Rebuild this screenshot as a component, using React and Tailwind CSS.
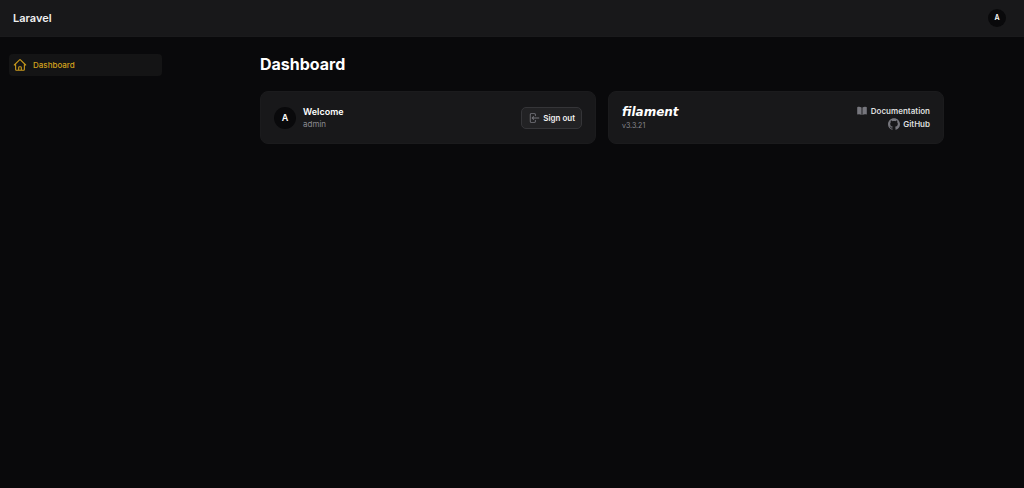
import React from 'react';
import { SiGithub } from 'react-icons/si';

const HomeIcon = () => (
    <svg className="size-[14px] shrink-0 text-[#c9991c]" viewBox="0 0 24 24" fill="none" stroke="currentColor" strokeWidth="1.9" strokeLinecap="round" strokeLinejoin="round" aria-hidden="true">
        <path d="m2.25 12 8.954-8.955c.44-.439 1.152-.439 1.591 0L21.75 12M4.5 9.75v10.125c0 .621.504 1.125 1.125 1.125H9.75v-4.875c0-.621.504-1.125 1.125-1.125h2.25c.621 0 1.125.504 1.125 1.125V21h4.125c.621 0 1.125-.504 1.125-1.125V9.75M8.25 21h8.25" />
    </svg>
);

const SignOutIcon = () => (
    <svg className="size-3 shrink-0 text-[#77777d]" viewBox="0 0 20 20" fill="currentColor" aria-hidden="true">
        <path fillRule="evenodd" clipRule="evenodd" d="M3 4.25A2.25 2.25 0 0 1 5.25 2h5.5A2.25 2.25 0 0 1 13 4.25v2a.75.75 0 0 1-1.5 0v-2a.75.75 0 0 0-.75-.75h-5.5a.75.75 0 0 0-.75.75v11.5c0 .414.336.75.75.75h5.5a.75.75 0 0 0 .75-.75v-2a.75.75 0 0 1 1.5 0v2A2.25 2.25 0 0 1 10.75 18h-5.5A2.25 2.25 0 0 1 3 15.75V4.25Z" />
        <path fillRule="evenodd" clipRule="evenodd" d="M19 10a.75.75 0 0 0-.75-.75H8.704l1.048-.943a.75.75 0 1 0-1.004-1.114l-2.5 2.25a.75.75 0 0 0 0 1.114l2.5 2.25a.75.75 0 1 0 1.004-1.114l-1.048-.943h9.546A.75.75 0 0 0 19 10Z" />
    </svg>
);

const BookIcon = () => (
    <svg className="size-3 shrink-0 text-[#76767d]" viewBox="0 0 20 20" fill="currentColor" aria-hidden="true">
        <path d="M10.75 16.82A7.462 7.462 0 0 1 15 15.5c.71 0 1.396.098 2.046.282A.75.75 0 0 0 18 15.06v-11a.75.75 0 0 0-.546-.721A9.006 9.006 0 0 0 15 3a8.963 8.963 0 0 0-4.25 1.065V16.82ZM9.25 4.065A8.963 8.963 0 0 0 5 3c-.85 0-1.673.118-2.454.339A.75.75 0 0 0 2 4.06v11a.75.75 0 0 0 .954.721A7.506 7.506 0 0 1 5 15.5c1.579 0 3.042.487 4.25 1.32V4.065Z" />
    </svg>
);

const Card = ({ children }) => (
    <section className="flex items-center justify-between rounded-lg border border-[#1b1b1d] bg-[#18181a] px-[13px] py-3">
        {children}
    </section>
);

const App = () => {
    return (
        <div className="flex min-h-screen flex-col bg-[#09090b] font-['Inter',sans-serif] text-white">
            <header className="flex h-[37px] items-center justify-between border-b border-[#1a1a1c] bg-[#18181a] pl-[13px] pr-[18px]">
                <a href="#" className="text-[11px] leading-4 font-semibold text-[#f0f0f0]">Laravel</a>
                <button type="button" aria-label="User menu" className="flex size-[18px] items-center justify-center rounded-full bg-[#09090b] text-[7px] font-semibold">
                    A
                </button>
            </header>

            <div className="flex flex-1">
                <nav className="w-[180px] shrink-0 pt-[17px] pr-[18px] pl-[9px]">
                    <a href="#" aria-current="page" className="flex h-[22px] items-center gap-[6px] rounded-[4px] bg-[#141415] px-1 text-[8px] font-medium text-[#d3a21d]">
                        <HomeIcon />
                        Dashboard
                    </a>
                </nav>

                <main className="min-w-0 flex-1 pt-[17px]">
                    <div className="mx-auto flex max-w-[684px] flex-col gap-[17px]">
                        <h1 className="text-[16px] leading-5 font-bold">Dashboard</h1>

                        <div className="grid grid-cols-2 gap-3">
                            <Card>
                                <div className="flex items-center gap-[7px]">
                                    <div className="flex size-[22px] items-center justify-center rounded-full bg-[#09090b] text-[9px] font-semibold">
                                        A
                                    </div>
                                    <div>
                                        <h2 className="text-[9px] leading-[14px] font-semibold">Welcome</h2>
                                        <p className="text-[8px] leading-[11px] text-[#8a8a90]">admin</p>
                                    </div>
                                </div>
                                <button type="button" className="flex h-[22px] items-center gap-[3px] rounded-[5px] border border-[#353538] bg-[#222224] px-[6px] text-[8px] font-semibold text-[#f0f0f0]">
                                    <SignOutIcon />
                                    Sign out
                                </button>
                            </Card>

                            <Card>
                                <div>
                                    <a href="#" className="block font-['DejaVu_Sans',sans-serif] text-[12px] leading-4 font-bold italic">filament</a>
                                    <p className="text-[7px] leading-[11px] text-[#8a8a90]">v3.3.21</p>
                                </div>
                                <div className="flex flex-col items-end gap-px text-[8px] leading-3 font-semibold text-[#dededf]">
                                    <a href="#" className="flex items-center gap-[3px]">
                                        <BookIcon />
                                        Documentation
                                    </a>
                                    <a href="#" className="flex items-center gap-[3px]">
                                        <SiGithub className="size-3 text-[#76767d]" aria-hidden="true" />
                                        GitHub
                                    </a>
                                </div>
                            </Card>
                        </div>
                    </div>
                </main>
            </div>
        </div>
    );
};

export default App;
